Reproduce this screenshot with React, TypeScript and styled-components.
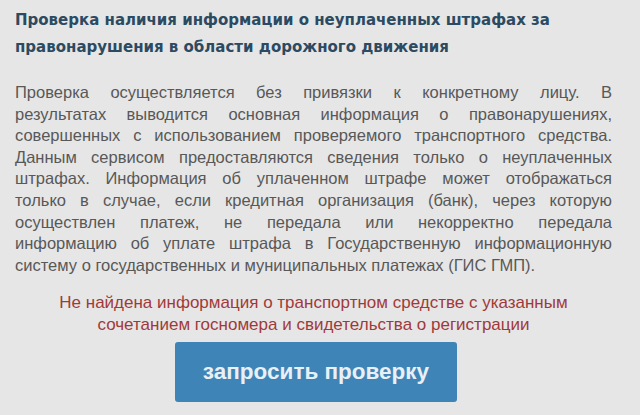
import styled, { createGlobalStyle } from "styled-components";

const GlobalStyle = createGlobalStyle`
  html, body {
    margin: 0;
    padding: 0;
    background: #e6e6e6;
  }
`;

const descriptionLines = [
  "Проверка осуществляется без привязки к конкретному лицу. В",
  "результатах выводится основная информация о правонарушениях,",
  "совершенных с использованием проверяемого транспортного средства.",
  "Данным сервисом предоставляются сведения только о неуплаченных",
  "штрафах. Информация об уплаченном штрафе может отображаться",
  "только в случае, если кредитная организация (банк), через которую",
  "осуществлен платеж, не передала или некорректно передала",
  "информацию об уплате штрафа в Государственную информационную",
  "систему о государственных и муниципальных платежах (ГИС ГМП).",
];

export default function App() {
  return (
    <>
      <GlobalStyle />
      <Page>
        <Title>
          Проверка наличия информации о неуплаченных штрафах за
          правонарушения в области дорожного движения
        </Title>
        <Description>
          {descriptionLines.map((line, i) => (
            <Line key={i} $last={i === descriptionLines.length - 1}>
              {line}
            </Line>
          ))}
        </Description>
        <ErrorText>
          Не найдена информация о транспортном средстве с указанным
          <br />
          сочетанием госномера и свидетельства о регистрации
        </ErrorText>
        <Actions>
          <CheckButton type="button">запросить проверку</CheckButton>
        </Actions>
      </Page>
    </>
  );
}

const Page = styled.div`
  width: 640px;
  height: 415px;
  box-sizing: border-box;
  padding: 7px 28px 0 15px;
  overflow: hidden;
`;

const Title = styled.h1`
  margin: 0;
  font-family: "DejaVu Sans", Verdana, sans-serif;
  font-size: 15px;
  font-weight: 700;
  line-height: 27px;
  color: #2c4a61;
`;

const Description = styled.div`
  margin: 21px 0 0;
  font-family: "Liberation Sans", Arial, sans-serif;
  font-size: 16.5px;
  line-height: 21.6px;
  color: #585858;
`;

const Line = styled.span<{ $last?: boolean }>`
  display: block;
  white-space: nowrap;
  text-align: ${({ $last }) => ($last ? "left" : "justify")};
  text-align-last: ${({ $last }) => ($last ? "left" : "justify")};
`;

const ErrorText = styled.p`
  margin: 16px 0 0;
  font-family: "Liberation Sans", Arial, sans-serif;
  font-size: 17px;
  line-height: 22px;
  color: #a03a3a;
  text-align: center;
`;

const Actions = styled.div`
  display: flex;
  justify-content: center;
  margin-top: 6px;
`;

const CheckButton = styled.button`
  appearance: none;
  width: 282px;
  height: 60px;
  margin-left: 5px;
  border: 0;
  border-radius: 3px;
  background: #3e84b6;
  color: #e9f0f5;
  font-family: "Liberation Sans", Arial, sans-serif;
  font-size: 22.5px;
  font-weight: 700;
  cursor: pointer;
`;
